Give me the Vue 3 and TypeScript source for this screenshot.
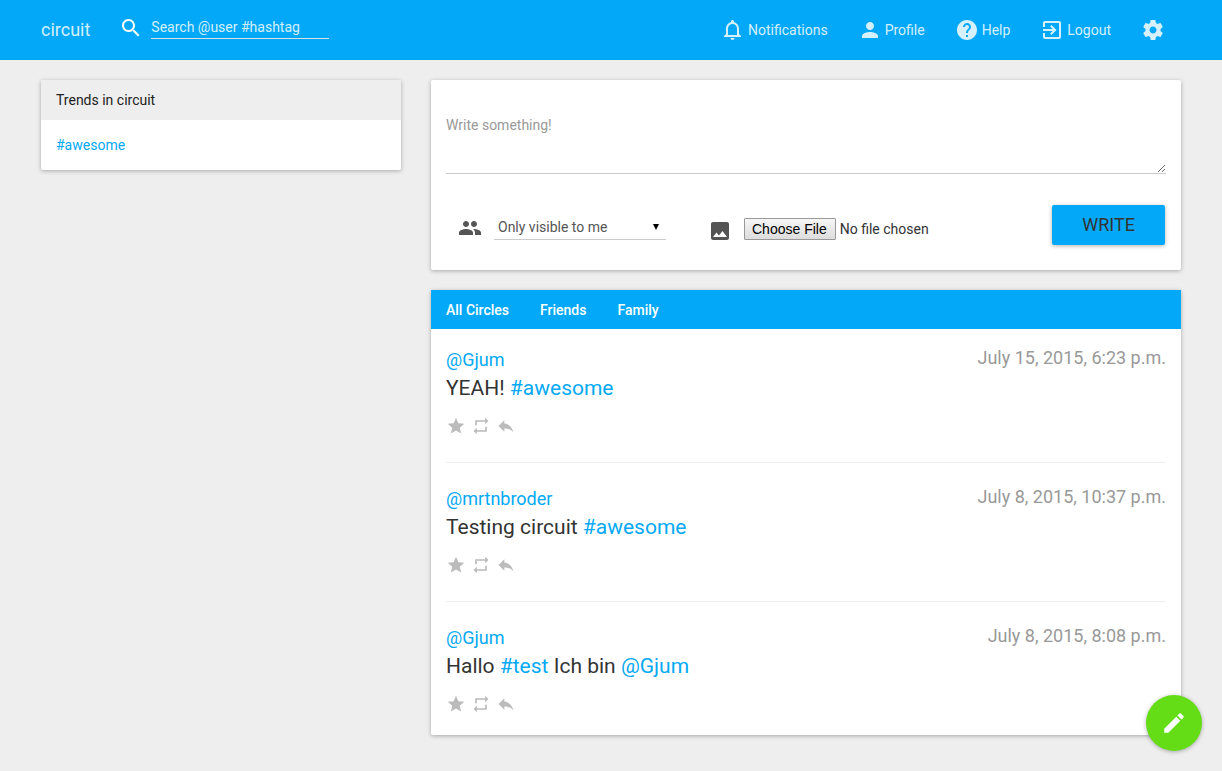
<script setup lang="ts">
import { ref } from 'vue'

interface Part {
  text: string
  link?: boolean
}
interface Post {
  id: number
  user: string
  date: string
  parts: Part[]
}
interface NavItem {
  label: string
  icon: string
}

const navItems: NavItem[] = [
  {
    label: 'Notifications',
    icon: 'M11.5 22c1.1 0 2-.9 2-2h-4c0 1.1.9 2 2 2zm6.5-6v-5.5c0-3.07-2.13-5.64-5-6.32V3.5c0-.83-.67-1.5-1.5-1.5S10 2.67 10 3.5v.68c-2.87.68-5 3.25-5 6.32V16l-2 2v1h17v-1l-2-2zm-2 1H7v-6.5C7 8.01 9.01 6 11.5 6S16 8.01 16 10.5V17z',
  },
  {
    label: 'Profile',
    icon: 'M12 12c2.21 0 4-1.79 4-4s-1.79-4-4-4-4 1.79-4 4 1.79 4 4 4zm0 2c-2.67 0-8 1.34-8 4v2h16v-2c0-2.66-5.33-4-8-4z',
  },
  {
    label: 'Help',
    icon: 'M12 2C6.48 2 2 6.48 2 12s4.48 10 10 10 10-4.48 10-10S17.52 2 12 2zm1 17h-2v-2h2v2zm2.07-7.75l-.9.92C13.45 12.9 13 13.5 13 15h-2v-.5c0-1.1.45-2.1 1.17-2.83l1.24-1.26c.37-.36.59-.86.59-1.41 0-1.1-.9-2-2-2s-2 .9-2 2H8c0-2.21 1.79-4 4-4s4 1.79 4 4c0 .88-.36 1.68-.93 2.25z',
  },
  {
    label: 'Logout',
    icon: 'M10.09 15.59L11.5 17l5-5-5-5-1.41 1.41L12.67 11H3v2h9.67l-2.58 2.59zM19 3H5c-1.11 0-2 .9-2 2v4h2V5h14v14H5v-4H3v4c0 1.1.89 2 2 2h14c1.1 0 2-.9 2-2V5c0-1.1-.9-2-2-2z',
  },
]

const actions: NavItem[] = [
  { label: 'Favourite', icon: 'M12 17.27L18.18 21l-1.64-7.03L22 9.24l-7.19-.61L12 2 9.19 8.63 2 9.24l5.46 4.73L5.82 21z' },
  { label: 'Share', icon: 'M7 7h10v3l4-4-4-4v3H5v6h2V7zm10 10H7v-3l-4 4 4 4v-3h12v-6h-2v4z' },
  { label: 'Reply', icon: 'M10 9V5l-7 7 7 7v-4.1c5 0 8.5 1.6 11 5.1-1-5-4-10-11-11z' },
]

const circles: string[] = ['All Circles', 'Friends', 'Family']

const posts: Post[] = [
  { id: 1, user: '@Gjum', date: 'July 15, 2015, 6:23 p.m.', parts: [{ text: 'YEAH! ' }, { text: '#awesome', link: true }] },
  { id: 2, user: '@mrtnbroder', date: 'July 8, 2015, 10:37 p.m.', parts: [{ text: 'Testing circuit ' }, { text: '#awesome', link: true }] },
  {
    id: 3,
    user: '@Gjum',
    date: 'July 8, 2015, 8:08 p.m.',
    parts: [{ text: 'Hallo ' }, { text: '#test', link: true }, { text: ' Ich bin ' }, { text: '@Gjum', link: true }],
  },
]

const search = ref('')
const message = ref('')
const visibility = ref('me')
</script>

<template>
  <div class="page">
    <header class="topbar">
      <div class="container bar">
        <a class="brand" href="#">circuit</a>
        <form class="search" role="search" @submit.prevent>
          <svg class="icon" viewBox="0 0 24 24" aria-hidden="true"><path d="M15.5 14h-.79l-.28-.27C15.41 12.59 16 11.11 16 9.5 16 5.91 13.09 3 9.5 3S3 5.91 3 9.5 5.91 16 9.5 16c1.61 0 3.09-.59 4.23-1.57l.27.28v.79l5 4.99L20.49 19l-4.99-5zm-6 0C7.01 14 5 11.99 5 9.5S7.01 5 9.5 5 14 7.01 14 9.5 11.99 14 9.5 14z" /></svg>
          <input v-model="search" type="text" placeholder="Search @user #hashtag" aria-label="Search" />
        </form>
        <nav class="nav">
          <a v-for="item in navItems" :key="item.label" href="#">
            <svg class="icon" viewBox="0 0 24 24" aria-hidden="true"><path :d="item.icon" /></svg>
            <span>{{ item.label }}</span>
          </a>
          <a href="#" aria-label="Settings">
            <svg class="icon" viewBox="0 0 24 24" aria-hidden="true"><path d="M19.43 12.98c.04-.32.07-.64.07-.98s-.03-.66-.07-.98l2.11-1.65c.19-.15.24-.42.12-.64l-2-3.46c-.12-.22-.39-.3-.61-.22l-2.49 1c-.52-.4-1.08-.73-1.69-.98l-.38-2.65C14.46 2.18 14.25 2 14 2h-4c-.25 0-.46.18-.49.42l-.38 2.65c-.61.25-1.17.59-1.69.98l-2.49-1c-.23-.09-.49 0-.61.22l-2 3.46c-.13.22-.07.49.12.64l2.11 1.65c-.04.32-.07.65-.07.98s.03.66.07.98l-2.11 1.65c-.19.15-.24.42-.12.64l2 3.46c.12.22.39.3.61.22l2.49-1c.52.4 1.08.73 1.69.98l.38 2.65c.03.24.24.42.49.42h4c.25 0 .46-.18.49-.42l.38-2.65c.61-.25 1.17-.59 1.69-.98l2.49 1c.23.09.49 0 .61-.22l2-3.46c.12-.22.07-.49-.12-.64l-2.11-1.65zM12 15.5c-1.93 0-3.5-1.57-3.5-3.5s1.57-3.5 3.5-3.5 3.5 1.57 3.5 3.5-1.57 3.5-3.5 3.5z" /></svg>
          </a>
        </nav>
      </div>
    </header>

    <div class="container columns">
      <aside class="card">
        <h2 class="trends-title">Trends in circuit</h2>
        <div class="trends-body"><a href="#">#awesome</a></div>
      </aside>

      <main class="main">
        <form class="card compose" @submit.prevent>
          <textarea v-model="message" placeholder="Write something!" aria-label="Message"></textarea>
          <div class="controls">
            <div class="audience">
              <svg class="icon" viewBox="0 0 24 24" aria-hidden="true"><path d="M16 11c1.66 0 2.99-1.34 2.99-3S17.66 5 16 5c-1.66 0-3 1.34-3 3s1.34 3 3 3zm-8 0c1.66 0 2.99-1.34 2.99-3S9.66 5 8 5C6.34 5 5 6.34 5 8s1.34 3 3 3zm0 2c-2.33 0-7 1.17-7 3.5V19h14v-2.5c0-2.33-4.67-3.5-7-3.5zm8 0c-.29 0-.62.02-.97.05 1.16.84 1.97 1.97 1.97 3.45V19h6v-2.5c0-2.33-4.67-3.5-7-3.5z" /></svg>
              <div class="select-wrap">
                <select v-model="visibility" aria-label="Visibility">
                  <option value="me">Only visible to me</option>
                </select>
                <svg class="caret" viewBox="0 0 6 6" aria-hidden="true"><path d="M0 0h6L3 6z" /></svg>
              </div>
            </div>
            <div class="attach">
              <svg class="icon" viewBox="0 0 24 24" aria-hidden="true"><path d="M21 19V5c0-1.1-.9-2-2-2H5c-1.1 0-2 .9-2 2v14c0 1.1.9 2 2 2h14c1.1 0 2-.9 2-2zM8.5 13.5l2.5 3.01L14.5 12l4.5 6H5l3.5-4.5z" /></svg>
              <input type="file" aria-label="Picture" />
            </div>
            <button class="write" type="submit">WRITE</button>
          </div>
        </form>

        <section class="card feed">
          <nav class="tabs">
            <a v-for="circle in circles" :key="circle" href="#">{{ circle }}</a>
          </nav>
          <article v-for="post in posts" :key="post.id" class="post">
            <div class="post-head">
              <a class="user" href="#">{{ post.user }}</a>
              <time>{{ post.date }}</time>
            </div>
            <p><template v-for="(part, i) in post.parts" :key="i"><a v-if="part.link" href="#">{{ part.text }}</a><template v-else>{{ part.text }}</template></template></p>
            <div class="actions">
              <button v-for="action in actions" :key="action.label" type="button" :aria-label="action.label">
                <svg viewBox="0 0 24 24" aria-hidden="true"><path :d="action.icon" /></svg>
              </button>
            </div>
          </article>
        </section>
      </main>
    </div>

    <button class="fab" type="button" aria-label="New post">
      <svg viewBox="0 0 24 24" aria-hidden="true"><path d="M3 17.25V21h3.75L17.81 9.94l-3.75-3.75L3 17.25zM20.71 7.04c.39-.39.39-1.02 0-1.41l-2.34-2.34c-.39-.39-1.02-.39-1.41 0l-1.83 1.83 3.75 3.75 1.83-1.83z" /></svg>
    </button>
  </div>
</template>

<style>
body {
  background: #eee;
}
</style>

<style scoped>
.page,
.page * {
  box-sizing: border-box;
}
.page {
  padding-bottom: 20px;
  font-family: Roboto, 'Liberation Sans', sans-serif;
  font-size: 14px;
  line-height: 20px;
  color: #333;
}
a {
  color: #03a9f4;
  text-decoration: none;
}
svg {
  display: block;
  fill: currentColor;
}
.icon {
  flex: none;
  width: 24px;
  height: 24px;
}
.container {
  width: calc(100% - 30px);
  max-width: 1140px;
  margin: 0 auto;
}
.topbar {
  background: #03a9f8;
}
.bar {
  display: flex;
  align-items: center;
  min-height: 60px;
}
.brand {
  font-size: 18px;
  color: rgba(255, 255, 255, 0.84);
}
.search {
  display: flex;
  align-items: flex-start;
  gap: 8px;
  margin: 0 0 4px 29px;
  color: #fff;
}
.search input {
  width: 178px;
  height: 23px;
  padding: 0;
  border: 0;
  border-bottom: 1px solid #ddd;
  border-radius: 0;
  outline: 0;
  background: transparent;
  font: inherit;
  color: #fff;
}
.search input::placeholder {
  color: rgba(255, 255, 255, 0.84);
}
.nav {
  display: flex;
  gap: 30px;
  margin-left: auto;
  padding-right: 16px;
}
.nav a {
  display: flex;
  align-items: center;
  gap: 3px;
  color: rgba(255, 255, 255, 0.84);
}
.columns {
  display: grid;
  grid-template-columns: 12fr 25fr;
  align-items: start;
  gap: 30px;
  margin-top: 20px;
}
.card {
  overflow: hidden;
  border-radius: 2px;
  background: #fff;
  box-shadow: 0 1px 4px rgba(0, 0, 0, 0.3);
}
.feed {
  overflow: visible;
}
.trends-title {
  margin: 0;
  padding: 10px 15px;
  background: #eee;
  font-size: 14px;
  font-weight: 400;
  color: #212121;
}
.trends-body {
  padding: 15px;
}
.main {
  display: flex;
  flex-direction: column;
  gap: 20px;
  min-width: 0;
}
.compose {
  padding: 30px 15px 25px;
}
textarea {
  display: block;
  width: 100%;
  height: 64px;
  padding: 5px 0;
  border: 0;
  border-bottom: 1px solid #ccc;
  outline: 0;
  background: transparent;
  font: inherit;
  color: #555;
  resize: vertical;
}
textarea::placeholder {
  color: #999;
}
.controls {
  display: flex;
  align-items: flex-start;
  margin-top: 31px;
  padding: 0 1px 0 12px;
}
.audience,
.attach {
  display: flex;
  align-items: center;
  gap: 12px;
  margin-top: 10px;
  color: #555;
}
.attach {
  align-items: flex-start;
  margin-top: 13px;
  margin-left: 42px;
}
.attach .icon {
  margin-top: 1px;
}
.select-wrap {
  position: relative;
}
select {
  appearance: none;
  display: block;
  width: 172px;
  height: 25px;
  padding: 0 20px 0 4px;
  border: 0;
  border-bottom: 1px solid #ccc;
  border-radius: 0;
  outline: 0;
  background: transparent;
  font: inherit;
  color: #555;
}
.caret {
  position: absolute;
  top: 9px;
  right: 7px;
  width: 6px;
  height: 6px;
  color: #000;
  pointer-events: none;
}
input[type='file'] {
  width: 220px;
  font: inherit;
  color: #333;
}
input[type='file']::file-selector-button {
  height: 22px;
  margin: 0 4px 0 0;
  padding: 0 8px 0 7px;
  border: 1px solid #999;
  border-radius: 1px;
  background: linear-gradient(#f6f6f6, #ddd);
  font: 14px 'Liberation Sans', Arial, sans-serif;
  color: #000;
}
.write {
  height: 40px;
  margin-left: auto;
  padding: 0 30px 2px;
  border: 0;
  border-radius: 2px;
  background: #03a9f8;
  box-shadow: 0 1px 4px rgba(0, 0, 0, 0.3);
  font: 18px Roboto, 'Liberation Sans', sans-serif;
  color: #333;
}
.tabs {
  display: flex;
  gap: 31px;
  padding: 10px 15px 9px;
  background: #03a9f8;
  font-weight: 500;
}
.tabs a {
  color: #fff;
}
.post {
  margin: 0 15px;
  padding: 20px 0 26px;
}
.post + .post {
  padding-top: 25px;
  border-top: 1px solid #eee;
}
.post:last-child {
  padding-bottom: 21px;
}
.post-head {
  display: flex;
  justify-content: space-between;
  font-size: 18px;
}
.user {
  margin-top: 1px;
}
time {
  margin-top: -1px;
  color: #999;
}
.post p {
  margin: 0;
  font-size: 21px;
  line-height: 36px;
}
.actions {
  display: flex;
  gap: 5px;
  margin-top: 10px;
}
.actions button {
  padding: 0;
  border: 0;
  background: none;
  color: #bbb;
}
.actions svg {
  width: 20px;
  height: 20px;
}
.fab {
  position: fixed;
  right: 20px;
  bottom: 20px;
  display: grid;
  place-items: center;
  width: 56px;
  height: 56px;
  padding: 0;
  border: 0;
  border-radius: 50%;
  background: #64dd17;
  box-shadow: 0 1px 4px rgba(0, 0, 0, 0.3);
  color: #fff;
}
.fab svg {
  width: 26px;
  height: 26px;
}
</style>
